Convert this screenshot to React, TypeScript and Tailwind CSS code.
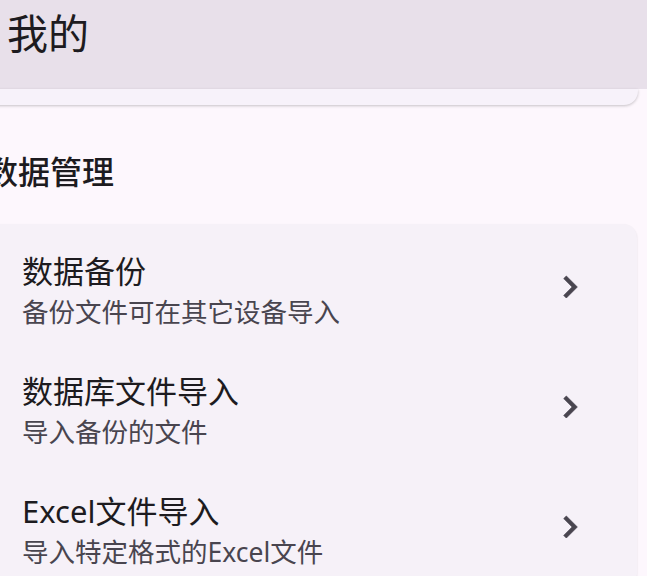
import React from 'react';

interface SettingItem {
  title: string;
  subtitle: string;
}

const items: SettingItem[] = [
  { title: '数据备份', subtitle: '备份文件可在其它设备导入' },
  { title: '数据库文件导入', subtitle: '导入备份的文件' },
  { title: 'Excel文件导入', subtitle: '导入特定格式的Excel文件' },
];

function ChevronRight() {
  return (
    <svg viewBox="0 0 24 24" className="h-[44px] w-[44px] fill-[#49454f]">
      <path d="M10 6L8.59 7.41 13.17 12l-4.58 4.59L10 18l6-6z" stroke="#49454f" strokeWidth="0.4" />
    </svg>
  );
}

function SettingRow({ item }: { item: SettingItem }) {
  return (
    <div className="flex h-[120px] items-center pl-[38px] pr-[45px]">
      <div className="flex flex-1 flex-col pt-[9px]">
        <span className="text-[31px] leading-[42px] text-[#1d1b20]">{item.title}</span>
        <span className="text-[26.5px] leading-[41px] text-[#49454f]">{item.subtitle}</span>
      </div>
      <ChevronRight />
    </div>
  );
}

export default function App() {
  return (
    <div
      className="h-[576px] w-[647px] overflow-hidden bg-[#fdf7fd]"
      style={{ fontFamily: '"Noto Sans", "Noto Sans CJK SC", sans-serif' }}
    >
      {/* App bar */}
      <div className="h-[89px] bg-[#e8e0ea] pl-[7px] pt-[13px]">
        <h1 className="text-[41px] leading-[40px] text-[#1d1b20]">我的</h1>
      </div>

      {/* Profile card, scrolled under the app bar */}
      <div className="-ml-4 mr-[9px] h-[16px] rounded-b-[14px] bg-[#f7f2fa] shadow-[0_1px_3px_rgba(0,0,0,0.22)]" />

      {/* Data management */}
      <h2 className="-ml-[14px] mt-[47px] text-[32px] font-medium leading-[40px] text-[#1d1b20]">数据管理</h2>

      <div className="-ml-4 mr-[10px] mt-[32px] rounded-[14px] bg-[#f6f1f8] pt-[3px] shadow-[0_1px_2px_rgba(0,0,0,0.12)]">
        {items.map((item) => (
          <SettingRow key={item.title} item={item} />
        ))}
      </div>
    </div>
  );
}
